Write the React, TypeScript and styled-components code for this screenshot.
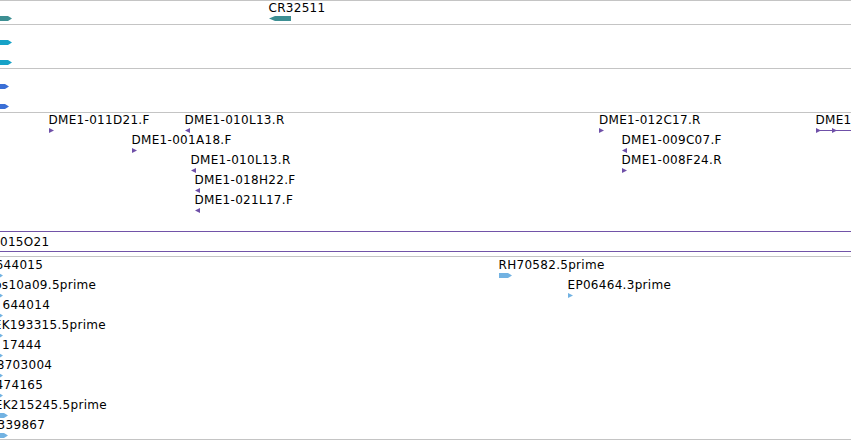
import React from 'react';
import styled, { createGlobalStyle } from 'styled-components';

const GlobalStyle = createGlobalStyle`
  html, body { margin: 0; padding: 0; background: #ffffff; }
  body { font-family: "DejaVu Sans", "Liberation Sans", sans-serif; }
`;

const Page = styled.div`
  width: 851px;
  height: 440px;
  overflow: hidden;
  background: #ffffff;
  display: flex;
  flex-direction: column;
`;

const Track = styled.div<{ $h: number; $bare?: boolean }>`
  position: relative;
  flex: 0 0 ${(p) => p.$h}px;
  height: ${(p) => p.$h}px;
  box-sizing: border-box;
  border-top: ${(p) => (p.$bare ? 'none' : '1px solid #c4c4c4')};
  overflow: hidden;
`;

const Feature = styled.div<{ $x: number; $y: number }>`
  position: absolute;
  left: ${(p) => p.$x}px;
  top: ${(p) => p.$y}px;
  display: flex;
  flex-direction: column;
  align-items: flex-start;
`;

const Label = styled.span`
  display: block;
  height: 14px;
  font-size: 12px;
  line-height: 14px;
  letter-spacing: 0.3px;
  color: #000;
  white-space: nowrap;
`;

const GlyphSvg = styled.svg<{ $dx: number }>`
  display: block;
  margin-top: 1px;
  margin-left: ${(p) => p.$dx}px;
  overflow: visible;
`;

const CloneBar = styled.div`
  height: 21px;
  box-sizing: border-box;
  border-top: 1px solid #7254a8;
  border-bottom: 1px solid #7254a8;
  padding: 3px 0 0 0;
`;

type Kind = 'arrowR' | 'arrowL' | 'triR' | 'triL' | 'pair';

interface FeatureData {
  x: number;
  y: number;
  label?: string;
  gx?: number;
  kind: Kind;
  w: number;
  tip?: number;
  color: string;
}

const Glyph: React.FC<{ kind: Kind; w: number; tip?: number; color: string; dx: number }> = ({
  kind,
  w,
  tip = 4,
  color,
  dx,
}) => {
  const h = 5;
  let shape: React.ReactNode = null;
  if (kind === 'arrowR') {
    shape = <polygon points={`0,0 ${w - tip},0 ${w},${h / 2} ${w - tip},${h} 0,${h}`} fill={color} />;
  } else if (kind === 'arrowL') {
    shape = <polygon points={`0,${h / 2} ${tip},0 ${w},0 ${w},${h} ${tip},${h}`} fill={color} />;
  } else if (kind === 'triR') {
    shape = <polygon points={`0,0 ${w},${h / 2} 0,${h}`} fill={color} />;
  } else if (kind === 'triL') {
    shape = <polygon points={`${w},0 0,${h / 2} ${w},${h}`} fill={color} />;
  } else {
    shape = (
      <g fill={color}>
        <rect x={0} y={2} width={w} height={1} />
        <polygon points={`0,0 5,2.5 0,5`} />
        <polygon points={`16,0 21,2.5 16,5`} />
      </g>
    );
  }
  return (
    <GlyphSvg $dx={dx} width={w} height={h} viewBox={`0 0 ${w} ${h}`}>
      {shape}
    </GlyphSvg>
  );
};

const FeatureItem: React.FC<{ f: FeatureData }> = ({ f }) => (
  <Feature $x={f.x} $y={f.y}>
    <Label>{f.label ?? ''}</Label>
    <Glyph kind={f.kind} w={f.w} tip={f.tip} color={f.color} dx={(f.gx ?? f.x) - f.x} />
  </Feature>
);

const TEAL = '#3d8f93';
const CYAN = '#17a2c7';
const BLUE = '#3a6fd6';
const PURPLE = '#6f50a8';
const LIGHT = '#72b2e2';

const track1: FeatureData[] = [
  { x: -2, y: 0, kind: 'arrowR', w: 14, tip: 4, color: TEAL },
  { x: 268.5, y: 0, label: 'CR32511', kind: 'arrowL', w: 22, tip: 6, color: TEAL },
];

const track2: FeatureData[] = [
  { x: -2, y: 0, kind: 'arrowR', w: 14, tip: 4, color: CYAN },
  { x: -2, y: 20, kind: 'arrowR', w: 14, tip: 4, color: CYAN },
];

const track3: FeatureData[] = [
  { x: -3, y: 0, kind: 'arrowR', w: 12, tip: 4, color: BLUE },
  { x: -3, y: 20, kind: 'arrowR', w: 12, tip: 4, color: BLUE },
];

const track4: FeatureData[] = [
  { x: 48.5, y: 0, label: 'DME1-011D21.F', kind: 'triR', w: 5, color: PURPLE },
  { x: 184.5, y: 0, label: 'DME1-010L13.R', kind: 'triL', w: 5, color: PURPLE },
  { x: 131.5, y: 20, label: 'DME1-001A18.F', kind: 'triR', w: 5, color: PURPLE },
  { x: 190.5, y: 40, label: 'DME1-010L13.R', kind: 'triL', w: 5, color: PURPLE },
  { x: 194.5, y: 60, label: 'DME1-018H22.F', kind: 'triL', w: 5, color: PURPLE },
  { x: 194.5, y: 80, label: 'DME1-021L17.F', kind: 'triL', w: 5, color: PURPLE },
  { x: 599, y: 0, label: 'DME1-012C17.R', kind: 'triR', w: 5, color: PURPLE },
  { x: 621.5, y: 20, label: 'DME1-009C07.F', kind: 'triL', w: 5, color: PURPLE },
  { x: 621.5, y: 40, label: 'DME1-008F24.R', kind: 'triR', w: 5, color: PURPLE },
  { x: 815.5, y: 0, label: 'DME1', kind: 'pair', w: 40, color: PURPLE },
];

const leftRows: { label: string; x: number; tipAt: number }[] = [
  { label: '644015', x: -4.4, tipAt: 3 },
  { label: 'os10a09.5prime', x: -5.8, tipAt: 3 },
  { label: '644014', x: 2.5, tipAt: 3 },
  { label: 'EK193315.5prime', x: -6.2, tipAt: 3 },
  { label: '17444', x: 2, tipAt: 3 },
  { label: '8703004', x: -3.3, tipAt: 3 },
  { label: '474165', x: -4.4, tipAt: 3 },
  { label: 'EK215245.5prime', x: -5.2, tipAt: 8 },
  { label: '339867', x: -2.4, tipAt: 8 },
];

const track6: FeatureData[] = [
  ...leftRows.map((r, i) => ({
    x: r.x,
    y: 1 + i * 20,
    label: r.label,
    gx: r.tipAt - 14,
    kind: 'arrowR' as Kind,
    w: 14,
    tip: 4,
    color: LIGHT,
  })),
  { x: 498.5, y: 1, label: 'RH70582.5prime', kind: 'arrowR', w: 13, tip: 4, color: LIGHT },
  { x: 567.5, y: 21, label: 'EP06464.3prime', kind: 'triR', w: 5, color: LIGHT },
];

export default function App() {
  return (
    <>
      <GlobalStyle />
      <Page>
        <Track $h={24}>
          {track1.map((f, i) => (
            <FeatureItem key={i} f={f} />
          ))}
        </Track>
        <Track $h={44}>
          {track2.map((f, i) => (
            <FeatureItem key={i} f={f} />
          ))}
        </Track>
        <Track $h={44}>
          {track3.map((f, i) => (
            <FeatureItem key={i} f={f} />
          ))}
        </Track>
        <Track $h={119}>
          {track4.map((f, i) => (
            <FeatureItem key={i} f={f} />
          ))}
        </Track>
        <Track $h={25} $bare>
          <CloneBar>
            <Label>015O21</Label>
          </CloneBar>
        </Track>
        <Track $h={183}>
          {track6.map((f, i) => (
            <FeatureItem key={i} f={f} />
          ))}
        </Track>
        <Track $h={1} />
      </Page>
    </>
  );
}
